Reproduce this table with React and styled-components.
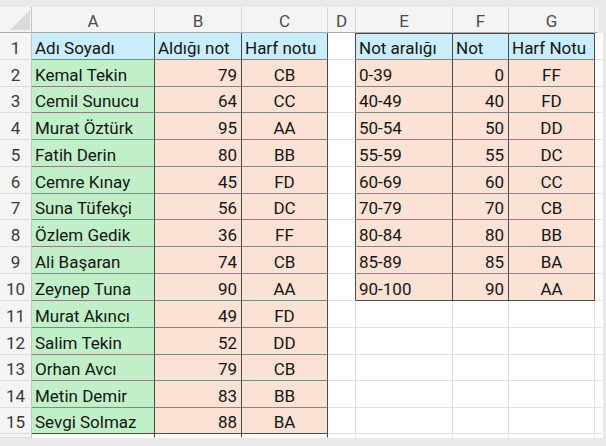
import React from "react";
import styled, { createGlobalStyle } from "styled-components";

const GlobalStyle = createGlobalStyle`
  html, body { margin: 0; padding: 0; background: #e9e9e9; }
  * { box-sizing: border-box; }
`;

const ROW_HEIGHTS = [27, 27, 26, 27, 27, 27, 26, 27, 27, 27, 27, 27, 26, 27, 26];
const COLS = ["A", "B", "C", "D", "E", "F", "G"];

const FILLS = {
  blue: "#caedfb",
  green: "#c1f0c8",
  peach: "#fbe2d5",
};

const LINES = {
  grid: "#e1e1e1",
  mid: "#858585",
  dark: "#4a4a4a",
  none: "transparent",
};

const Frame = styled.div`
  width: 606px;
  height: 446px;
  background: #e9e9e9;
  padding: 7px 8px 0 0;
  overflow: hidden;
  font-family: Roboto, "Noto Sans", sans-serif;
`;

const Sheet = styled.div`
  display: grid;
  grid-template-columns: 32px 123px 87px 86px 28px 97px 56px 86px 3px;
  grid-template-rows: 26px ${ROW_HEIGHTS.map((h) => h + "px").join(" ")} 4px;
  background: #fff;
`;

const Corner = styled.div`
  background: #f4f4f4;
  border-right: 1px solid #c4c4c4;
  border-bottom: 1px solid #a9a9a9;
  display: flex;
  align-items: flex-end;
  justify-content: flex-end;
  padding: 0 1px 2px 0;
`;

const ColHead = styled.div`
  background: #f4f4f4;
  border-right: 1px solid ${(p) => (p.$last ? "transparent" : "#d6d6d6")};
  border-bottom: 1px solid #a9a9a9;
  display: flex;
  align-items: center;
  justify-content: center;
  padding-top: 2px;
  font-size: 17px;
  color: #4d4d4d;
  line-height: 20px;
`;

const RowHead = styled.div`
  background: #f4f4f4;
  border-right: 1px solid #c4c4c4;
  border-bottom: 1px solid #dcdcdc;
  display: flex;
  align-items: flex-end;
  justify-content: center;
  padding-bottom: 1px;
  font-size: 17px;
  line-height: 20px;
  color: #3a3a3a;
`;

const Cell = styled.div`
  display: flex;
  align-items: flex-end;
  justify-content: ${(p) =>
    p.$align === "right" ? "flex-end" : p.$align === "center" ? "center" : "flex-start"};
  padding: 0 ${(p) => (p.$align === "center" ? "2px" : "4px")} 1px
    ${(p) => (p.$align === "center" ? "2px" : "3px")};
  background: ${(p) => FILLS[p.$fill] || "#ffffff"};
  border-right: 1px solid ${(p) => LINES[p.$right || "grid"]};
  border-bottom: 1px solid ${(p) => LINES[p.$bottom || "grid"]};
  border-top: ${(p) => (p.$top ? `1px solid ${LINES.dark}` : "0")};
  font-size: 17px;
  line-height: 20px;
  color: #151515;
  white-space: nowrap;
  overflow: hidden;
`;

const Triangle = () => (
  <svg width="20" height="20" viewBox="0 0 20 20">
    <polygon points="20,0 20,20 0,20" fill="#dadada" />
  </svg>
);

const students = [
  ["Kemal Tekin", 79, "CB"],
  ["Cemil Sunucu", 64, "CC"],
  ["Murat Öztürk", 95, "AA"],
  ["Fatih Derin", 80, "BB"],
  ["Cemre Kınay", 45, "FD"],
  ["Suna Tüfekçi", 56, "DC"],
  ["Özlem Gedik", 36, "FF"],
  ["Ali Başaran", 74, "CB"],
  ["Zeynep Tuna", 90, "AA"],
  ["Murat Akıncı", 49, "FD"],
  ["Salim Tekin", 52, "DD"],
  ["Orhan Avcı", 79, "CB"],
  ["Metin Demir", 83, "BB"],
  ["Sevgi Solmaz", 88, "BA"],
];

const scale = [
  ["0-39", 0, "FF"],
  ["40-49", 40, "FD"],
  ["50-54", 50, "DD"],
  ["55-59", 55, "DC"],
  ["60-69", 60, "CC"],
  ["70-79", 70, "CB"],
  ["80-84", 80, "BB"],
  ["85-89", 85, "BA"],
  ["90-100", 90, "AA"],
];

function LeftTable({ r }) {
  // r: 0 = header row (row 1), 1..14 = data rows
  const bottom = r === 14 ? "dark" : "mid";
  if (r === 0) {
    return (
      <>
        <Cell $fill="blue" $right="dark" $bottom={bottom}>Adı Soyadı</Cell>
        <Cell $fill="blue" $right="dark" $bottom={bottom}>Aldığı not</Cell>
        <Cell $fill="blue" $right="dark" $bottom={bottom}>Harf notu</Cell>
      </>
    );
  }
  const [name, score, grade] = students[r - 1];
  return (
    <>
      <Cell $fill="green" $right="dark" $bottom={bottom}>{name}</Cell>
      <Cell $fill="peach" $right="dark" $bottom={bottom} $align="right">{score}</Cell>
      <Cell $fill="peach" $right="dark" $bottom={bottom} $align="center">{grade}</Cell>
    </>
  );
}

function RightTable({ r }) {
  if (r > 9) {
    return (
      <>
        <Cell />
        <Cell />
        <Cell />
      </>
    );
  }
  const bottom = r === 9 ? "dark" : "mid";
  if (r === 0) {
    return (
      <>
        <Cell $fill="blue" $right="dark" $bottom={bottom} $top>Not aralığı</Cell>
        <Cell $fill="blue" $right="dark" $bottom={bottom} $top>Not</Cell>
        <Cell $fill="blue" $right="dark" $bottom={bottom} $top>Harf Notu</Cell>
      </>
    );
  }
  const [range, min, grade] = scale[r - 1];
  return (
    <>
      <Cell $fill="peach" $right="dark" $bottom={bottom}>{range}</Cell>
      <Cell $fill="peach" $right="dark" $bottom={bottom} $align="right">{min}</Cell>
      <Cell $fill="peach" $right="dark" $bottom={bottom} $align="center">{grade}</Cell>
    </>
  );
}

export default function App() {
  return (
    <>
      <GlobalStyle />
      <Frame>
        <Sheet>
          <Corner>
            <Triangle />
          </Corner>
          {COLS.map((c) => (
            <ColHead key={c}>{c}</ColHead>
          ))}
          <ColHead $last />
          {ROW_HEIGHTS.map((_, r) => (
            <React.Fragment key={r}>
              <RowHead>{r + 1}</RowHead>
              <LeftTable r={r} />
              <Cell $right={r <= 9 ? "dark" : "grid"} />
              <RightTable r={r} />
              <Cell $right="none" />
            </React.Fragment>
          ))}
          <RowHead />
          <Cell $right="dark" $bottom="none" />
          <Cell $right="dark" $bottom="none" />
          <Cell $right="dark" $bottom="none" />
          <Cell $bottom="none" />
          <Cell $bottom="none" />
          <Cell $bottom="none" />
          <Cell $bottom="none" />
          <Cell $right="none" $bottom="none" />
        </Sheet>
      </Frame>
    </>
  );
}
